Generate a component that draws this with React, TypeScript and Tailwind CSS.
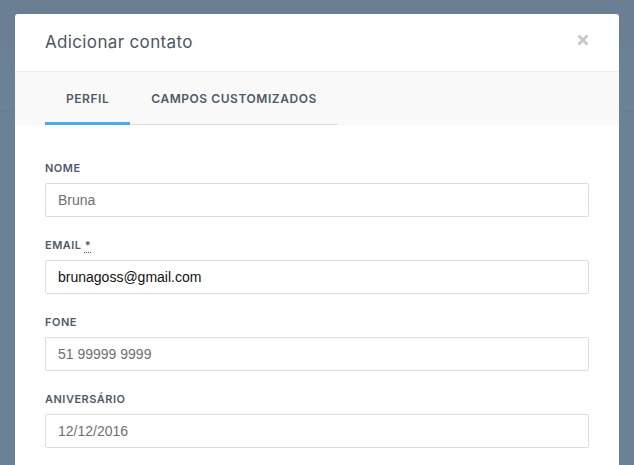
import React from 'react';

const fields = [
  { label: 'Nome', placeholder: 'Bruna' },
  { label: 'Email', required: true, value: 'brunagoss@gmail.com' },
  { label: 'Fone', placeholder: '51 99999 9999' },
  { label: 'Aniversário', placeholder: '12/12/2016' },
];

const tabs = ['Perfil', 'Campos customizados'];

export default function App() {
  return (
    <div className="relative h-[465px] w-[634px] overflow-hidden bg-[#6b8196]" style={{ fontFamily: 'Inter, "Noto Sans", sans-serif' }}>
      {/* pagina por tras do overlay */}
      <div className="h-[47px] border-b border-[#687d92] bg-[#6a7f94]" />
      <div className="h-[65px] border-b border-[#687d92]" />

      <div className="absolute left-[15px] top-[14px] w-[604px] rounded-t-[3px] bg-white">
        <div className="flex h-[57px] items-center justify-between pl-[30px] pr-[26px]">
          <h4 className="text-[17px] font-normal tracking-[0.35px] text-[#4b5665]">Adicionar contato</h4>
          <button className="-mt-[5px] flex h-5 w-5 items-center justify-center" aria-label="Fechar">
            <svg width="12" height="12" viewBox="0 0 12 12">
              <path d="M1.5 1.5 L10.5 10.5 M10.5 1.5 L1.5 10.5" stroke="#c9c9c9" strokeWidth="3" strokeLinecap="butt" />
            </svg>
          </button>
        </div>

        <div className="flex h-[54px] items-stretch border-t border-[#eeeeee] bg-[#f9f9f9] pl-[30px]">
          {tabs.map((tab, i) => (
            <div
              key={tab}
              className={
                i === 0
                  ? 'flex items-center border-b-[3px] border-[#4aaaea] px-[21px] pt-[3px] text-[12px] font-semibold uppercase tracking-[0.55px] text-[#4f5a68]'
                  : 'flex items-center border-b border-[#dddddd] px-[21px] pt-[1px] text-[12px] font-semibold uppercase tracking-[0.55px] text-[#4f5a68]'
              }
            >
              {tab}
            </div>
          ))}
        </div>

        <div className="px-[30px] pt-[35px]">
          {fields.map((f) => (
            <div key={f.label} className="mb-[20px]">
              <label className="mb-[7px] block h-4 text-[11px] font-semibold uppercase leading-4 tracking-[0.5px] text-[#4f5a68]">
                {f.label}
                {f.required && (
                  <>
                    {' '}
                    <abbr title="obrigatório" className="underline decoration-dotted underline-offset-[3px]">*</abbr>
                  </>
                )}
              </label>
              <input
                readOnly
                defaultValue={f.value}
                placeholder={f.placeholder}
                className="block h-[34px] w-[544px] rounded-[2px] border border-[#dddddd] px-3 text-[14px] text-[#111111] outline-none placeholder:text-[#6f6f6f]"
                style={{ fontFamily: '"Liberation Sans", Arial, sans-serif' }}
              />
            </div>
          ))}
        </div>
      </div>
    </div>
  );
}
